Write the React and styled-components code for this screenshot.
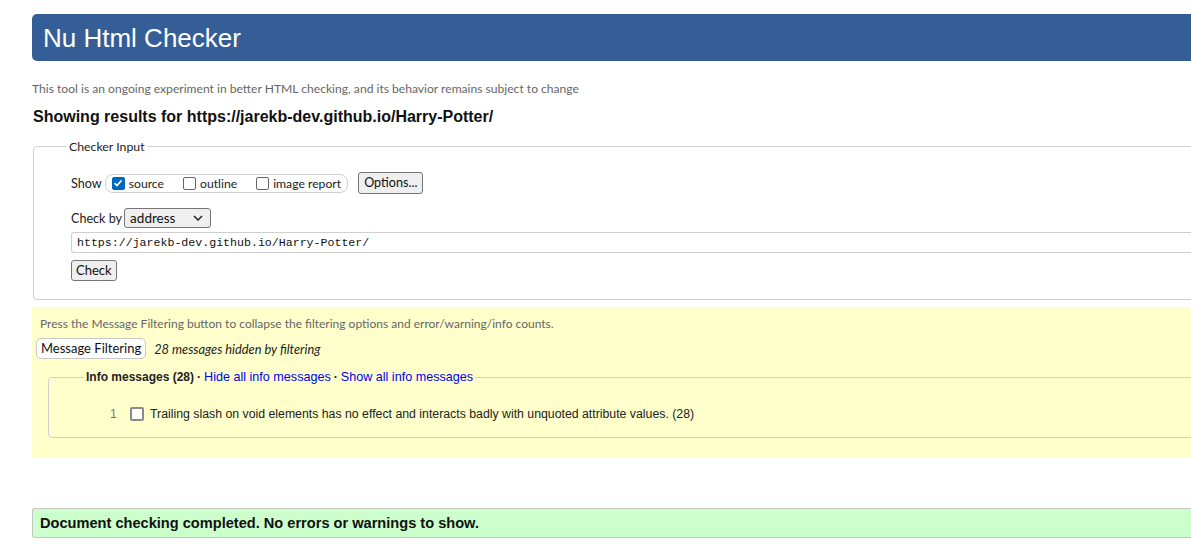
import React from "react";
import styled, { createGlobalStyle } from "styled-components";

const GlobalStyle = createGlobalStyle`
  html, body {
    margin: 0;
    padding: 0;
    background: #fff;
    overflow: hidden;
  }
  body {
    font-family: "Liberation Sans", Arial, sans-serif;
    color: #111;
  }
`;

const Page = styled.div`
  width: 1230px;
  padding: 14px 0 0 32px;
`;

const Header = styled.h1`
  margin: 0;
  height: 47px;
  background: #365e96;
  color: #fff;
  border-radius: 5px;
  font: 26px/49px "Liberation Sans", Arial, sans-serif;
  padding-left: 11px;
`;

const Note = styled.p`
  margin: 21px 0 0 0;
  font: 12.1px/14px Lato, "Open Sans", sans-serif;
  color: #666;
`;

const Results = styled.h2`
  margin: 12px 0 0 1px;
  font: bold 16px/18px "Liberation Sans", Arial, sans-serif;
  color: #111;
`;

const Fieldset = styled.fieldset`
  margin: ${(p) => p.$margin || "0"};
  padding: ${(p) => p.$padding || "0"};
  border: 1px solid #cfcfcf;
  border-radius: 4px;
  min-width: 0;
`;

const Legend = styled.legend`
  margin-left: ${(p) => p.$indent || "0"};
  padding: 0 2px;
  font: ${(p) => (p.$bold ? "bold 12px" : "12.3px")} / 15px
    ${(p) => (p.$bold ? `"Liberation Sans", Arial` : `Lato, "Open Sans"`)}, sans-serif;
  color: #222;
`;

const Row = styled.div`
  display: flex;
  align-items: center;
  gap: ${(p) => p.$gap || "3px"};
  margin-top: ${(p) => p.$top || "0"};
`;

const Label = styled.span`
  font: 12.6px Lato, "Open Sans", sans-serif;
  color: #222;
`;

const CheckGroup = styled.div`
  display: flex;
  align-items: center;
  height: 17px;
  padding: 0 6px 0 6px;
  border: 1px solid #cfcfcf;
  border-radius: 8px;
  gap: 19px;
`;

const CheckItem = styled.label`
  display: flex;
  align-items: center;
  gap: 4px;
  font: 12.2px Lato, "Open Sans", sans-serif;
  color: #222;
`;

const Box = styled.span`
  width: ${(p) => (p.$heavy ? "10px" : "11px")};
  height: ${(p) => (p.$heavy ? "10px" : "11px")};
  box-sizing: content-box;
  border: ${(p) => (p.$heavy ? "2px solid #8a8a8a" : "1px solid #666")};
  border-radius: 2px;
  background: ${(p) => (p.$checked ? "#0067c0" : "#fff")};
  border-color: ${(p) => (p.$checked ? "#0067c0" : undefined)};
  display: flex;
  align-items: center;
  justify-content: center;
`;

const Button = styled.button`
  height: ${(p) => p.$height || "21px"};
  padding: 0 ${(p) => p.$pad || "5px"};
  margin-left: ${(p) => p.$left || "0"};
  background: ${(p) => p.$bg || "#efefef"};
  border: 1px solid ${(p) => p.$border || "#767676"};
  border-radius: ${(p) => p.$radius || "3px"};
  font: ${(p) => p.$size || "13px"} Lato, "Open Sans", sans-serif;
  color: #111;
  line-height: 1;
`;

const Select = styled.div`
  width: 87px;
  height: 20px;
  box-sizing: border-box;
  border: 1px solid #767676;
  border-radius: 3px;
  background: #efefef;
  display: flex;
  align-items: center;
  justify-content: space-between;
  padding: 0 7px 0 5px;
  font: 13.5px Lato, "Open Sans", sans-serif;
  color: #111;
`;

const UrlInput = styled.div`
  margin-top: 4px;
  height: 21px;
  box-sizing: border-box;
  border: 1px solid #cfcfcf;
  border-right: none;
  border-radius: 3px 0 0 3px;
  padding-left: 5px;
  display: flex;
  align-items: center;
  font: 11.6px "Liberation Mono", "DejaVu Sans Mono", monospace;
  color: #111;
`;

const Filtering = styled.section`
  margin-top: 7px;
  background: #ffffcc;
  height: 150px;
  box-sizing: border-box;
  padding: 10px 0 0 4px;
`;

const FilterNote = styled.p`
  margin: 0 0 0 4px;
  font: 12px/14px Lato, "Open Sans", sans-serif;
  color: #666;
`;

const Hidden = styled.em`
  font: italic 12.8px Lato, "Open Sans", sans-serif;
  color: #222;
`;

const Dot = styled.span`
  font-weight: bold;
  padding: 0 3px;
`;

const LinkText = styled.span`
  color: #0000ee;
  font-weight: normal;
  font-size: 12.6px;
`;

const MessageRow = styled.div`
  display: flex;
  align-items: center;
  height: 20px;
  margin: 0;
  padding-left: 25px;
`;

const Num = styled.span`
  width: 20px;
  font: 12.3px "Liberation Sans", Arial, sans-serif;
  color: #777;
`;

const MessageText = styled.span`
  margin-left: 6px;
  font: 12.3px "Liberation Sans", Arial, sans-serif;
  color: #222;
`;

const Done = styled.div`
  margin-top: 51px;
  height: 30px;
  box-sizing: border-box;
  background: #ccffcc;
  border: 1px solid #c4c4c4;
  border-right: none;
  border-radius: 3px 0 0 3px;
  padding-left: 7px;
  display: flex;
  align-items: center;
  font: bold 14.6px "Liberation Sans", Arial, sans-serif;
  color: #111;
`;

const Tick = () => (
  <svg width="10" height="10" viewBox="0 0 10 10">
    <path d="M1.5 5.2 L4 7.6 L8.6 2.4" fill="none" stroke="#fff" strokeWidth="1.6" />
  </svg>
);

const Chevron = () => (
  <svg width="10" height="6" viewBox="0 0 10 6">
    <path d="M1 1 L5 5 L9 1" fill="none" stroke="#222" strokeWidth="1.5" />
  </svg>
);

export default function App() {
  return (
    <>
      <GlobalStyle />
      <Page>
        <Header>Nu Html Checker</Header>
        <Note>This tool is an ongoing experiment in better HTML checking, and its behavior remains subject to change</Note>
        <Results>Showing results for https://jarekb-dev.github.io/Harry-Potter/</Results>

        <Fieldset $margin="13px 0 0 1px" $padding="18px 0 18px 37px">
          <Legend $indent="-4px">Checker Input</Legend>
          <Row $gap="3px">
            <Label>Show</Label>
            <CheckGroup>
              <CheckItem>
                <Box $checked><Tick /></Box>source
              </CheckItem>
              <CheckItem>
                <Box />outline
              </CheckItem>
              <CheckItem>
                <Box />image report
              </CheckItem>
            </CheckGroup>
            <Button $left="7px" $height="22px" $pad="5px" $size="12.6px">Options...</Button>
          </Row>
          <Row $top="14px" $gap="2px">
            <Label>Check by</Label>
            <Select>
              address
              <Chevron />
            </Select>
          </Row>
          <UrlInput>https://jarekb-dev.github.io/Harry-Potter/</UrlInput>
          <Row $top="7px">
            <Button $height="21px" $pad="4px">Check</Button>
          </Row>
        </Fieldset>

        <Filtering>
          <FilterNote>Press the Message Filtering button to collapse the filtering options and error/warning/info counts.</FilterNote>
          <Row $top="7px" $gap="8px">
            <Button $bg="#fff" $border="#c8c8c8" $radius="5px" $pad="4px" $height="21px">Message Filtering</Button>
            <Hidden>28 messages hidden by filtering</Hidden>
          </Row>
          <Fieldset $margin="11px 0 0 12px" $padding="19px 0 13px 36px">
            <Legend $bold $indent="-1px">
              Info messages (28)<Dot>·</Dot>
              <LinkText>Hide all info messages</LinkText>
              <Dot>·</Dot>
              <LinkText>Show all info messages</LinkText>
            </Legend>
            <MessageRow>
              <Num>1</Num>
              <Box $heavy />
              <MessageText>Trailing slash on void elements has no effect and interacts badly with unquoted attribute values. (28)</MessageText>
            </MessageRow>
          </Fieldset>
        </Filtering>

        <Done>Document checking completed. No errors or warnings to show.</Done>
      </Page>
    </>
  );
}
